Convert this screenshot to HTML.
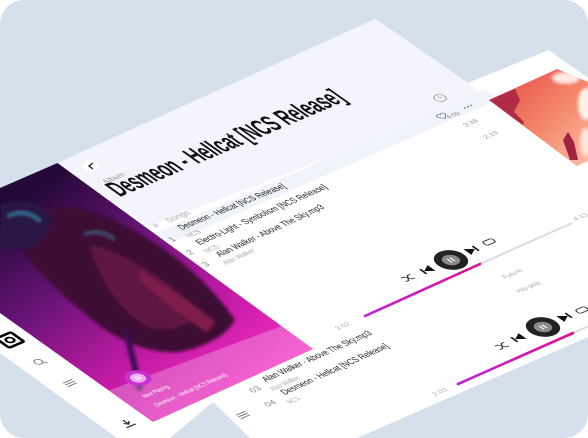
<!DOCTYPE html>
<html><head><meta charset="utf-8"><style>
html,body{margin:0;padding:0;background:#fff;width:588px;height:438px;overflow:hidden}
svg{display:block}
text{font-family:"Liberation Sans",sans-serif}
</style></head><body>
<svg width="588" height="438" viewBox="0 0 588 438" xmlns="http://www.w3.org/2000/svg">
<defs>
<clipPath id="page"><rect x="0" y="0" width="588" height="438" rx="24"/></clipPath>
<linearGradient id="art" gradientUnits="userSpaceOnUse" x1="60" y1="170" x2="230" y2="400">
<stop offset="0" stop-color="#240838"/><stop offset="0.35" stop-color="#6a1478"/><stop offset="0.7" stop-color="#c41aa6"/><stop offset="1" stop-color="#f02cc0"/></linearGradient>
<linearGradient id="cloud" gradientUnits="userSpaceOnUse" x1="500" y1="80" x2="588" y2="170">
<stop offset="0" stop-color="#e8504c"/><stop offset="0.5" stop-color="#f4876a"/><stop offset="1" stop-color="#fac0a8"/></linearGradient>
<linearGradient id="prog" gradientUnits="userSpaceOnUse" x1="360" y1="320" x2="480" y2="260">
<stop offset="0" stop-color="#c022e0"/><stop offset="1" stop-color="#e0108c"/></linearGradient>
<linearGradient id="prog2" gradientUnits="userSpaceOnUse" x1="455" y1="385" x2="575" y2="333">
<stop offset="0" stop-color="#c022e0"/><stop offset="1" stop-color="#e0108c"/></linearGradient>
<filter id="bl" x="-20%" y="-20%" width="140%" height="140%"><feGaussianBlur stdDeviation="4"/></filter>
<filter id="bl2"><feGaussianBlur stdDeviation="1.5"/></filter>
<clipPath id="artclip"><polygon points="0,188 57.5,163 313,349 153,422 0,313"/></clipPath>
<clipPath id="cloudclip"><polygon points="489,100 557,69 588,82 588,161 577,166"/></clipPath>
</defs>
<g clip-path="url(#page)">
<rect width="588" height="438" fill="#d6e0ec"/>
<polygon points="0,188 57.5,163 375.5,19 468,83 548.6,50 588,78 588,337 357,438 250,438 213,402 170,438 117,438 0,353" fill="#ffffff"/>
<polygon points="57.5,163 375.5,19 468,83 484,98 150,226" fill="#f4f5fc"/>
<polygon points="158,232 486,90 499,99 171,243" fill="#f1f3fb"/>
<ellipse cx="91" cy="166" rx="8" ry="6" fill="#fff"/>
<path d="M93,163 L89,166 L93,169" stroke="#222" stroke-width="1.4" fill="none"/>

<text transform="matrix(0.92 -0.392 0.815 0.58 120 197)" font-size="30" font-weight="bold" fill="#111" textLength="247" lengthAdjust="spacingAndGlyphs">Desmeon - Hellcat [NCS Release]</text>
<text transform="matrix(0.919 -0.395 0.815 0.58 106 184)" font-size="9" fill="#999" textLength="22" lengthAdjust="spacingAndGlyphs">Album</text>

<text transform="matrix(0.919 -0.395 0.815 0.58 156 228)" font-size="8" fill="#aaa">#</text>
<text transform="matrix(0.919 -0.395 0.815 0.58 169 223)" font-size="9" fill="#aaa" textLength="24" lengthAdjust="spacingAndGlyphs">Songs</text>
<text transform="matrix(0.919 -0.395 0.815 0.58 172 242)" font-size="9" fill="#888">1</text>
<text transform="matrix(0.919 -0.395 0.815 0.58 190 255)" font-size="9" fill="#888">2</text>
<text transform="matrix(0.919 -0.395 0.815 0.58 206 267)" font-size="9" fill="#888">3</text>
<text transform="matrix(0.925 -0.379 0.815 0.58 182 230)" font-size="10" fill="#222" textLength="113" lengthAdjust="spacingAndGlyphs">Desmeon - Hellcat [NCS Release]</text>
<text transform="matrix(0.914 -0.407 0.815 0.58 200 245)" font-size="10" fill="#222" textLength="140" lengthAdjust="spacingAndGlyphs">Electro-Light - Symbolism [NCS Release]</text>
<text transform="matrix(0.906 -0.423 0.815 0.58 220 257)" font-size="10" fill="#222" textLength="116" lengthAdjust="spacingAndGlyphs">Alan Walker - Above The Sky.mp3</text>
<text transform="matrix(0.919 -0.395 0.815 0.58 189 238)" font-size="8" fill="#aaa" textLength="14" lengthAdjust="spacingAndGlyphs">NCS</text>
<text transform="matrix(0.919 -0.395 0.815 0.58 207 253)" font-size="8" fill="#aaa" textLength="14" lengthAdjust="spacingAndGlyphs">NCS</text>
<text transform="matrix(0.919 -0.42 0.815 0.58 226 265)" font-size="8" fill="#aaa" textLength="32" lengthAdjust="spacingAndGlyphs">Alan Walker</text>
<g transform="matrix(0.919 -0.395 0.815 0.58 440 98)"><circle r="5" fill="none" stroke="#999" stroke-width="0.9"/><path d="M0,-3 V0 H2" stroke="#999" stroke-width="0.8" fill="none"/></g>
<g transform="matrix(0.919 -0.395 0.815 0.58 442 116)"><path d="M0,4 L-4,0 A2.2,2.2 0 0 1 0,-2 A2.2,2.2 0 0 1 4,0 Z" fill="none" stroke="#777" stroke-width="0.9"/></g>
<text transform="matrix(0.919 -0.395 0.815 0.58 449 119)" font-size="7" fill="#888" textLength="13" lengthAdjust="spacingAndGlyphs">4:09</text>
<g fill="#777"><circle cx="465" cy="108" r="0.9"/><circle cx="468" cy="106.7" r="0.9"/><circle cx="471" cy="105.4" r="0.9"/></g>
<text transform="matrix(0.919 -0.395 0.815 0.58 466 127)" font-size="7" fill="#999" textLength="14" lengthAdjust="spacingAndGlyphs">3:38</text>
<text transform="matrix(0.919 -0.395 0.815 0.58 486 139)" font-size="7" fill="#999" textLength="14" lengthAdjust="spacingAndGlyphs">2:19</text>

<g clip-path="url(#cloudclip)">
<rect x="480" y="60" width="120" height="120" fill="url(#cloud)"/>
<path d="M489,100 L515,89 L520,100 L514,112 L524,122 L520,132 L532,140 L540,150 L560,158 L577,166 Z" fill="#b02c44"/>
<path d="M563,140 L568,132 L574,142 L578,160 L570,160 Z" fill="#a02440"/>
<ellipse cx="566" cy="78" rx="14" ry="6" fill="#fde8e0" filter="url(#bl2)"/>
<ellipse cx="586" cy="104" rx="8" ry="16" fill="#fff0ea" filter="url(#bl2)"/>
<ellipse cx="586" cy="142" rx="6" ry="14" fill="#fde4dc" filter="url(#bl2)"/>
</g>

<line x1="480" y1="264" x2="572" y2="223" stroke="#dcdcdc" stroke-width="2"/>
<line x1="365" y1="316" x2="480" y2="264" stroke="url(#prog)" stroke-width="2.6" stroke-linecap="round"/>
<text transform="matrix(0.919 -0.395 0.815 0.58 338 330)" font-size="7" fill="#aaa" textLength="14" lengthAdjust="spacingAndGlyphs">2:02</text>
<text transform="matrix(0.919 -0.395 0.815 0.58 576 221)" font-size="7" fill="#aaa" textLength="14" lengthAdjust="spacingAndGlyphs">4:13</text>
<text transform="matrix(0.919 -0.395 0.815 0.58 505 279)" font-size="7" fill="#aaa" textLength="20" lengthAdjust="spacingAndGlyphs">Future</text>
<text transform="matrix(0.919 -0.395 0.815 0.58 519 293)" font-size="7" fill="#aaa" textLength="24" lengthAdjust="spacingAndGlyphs">Hip-pop</text>

<g transform="matrix(0.919 -0.395 0.815 0.58 408 278)"><path d="M-5,-3 L-2,-3 L2,3 L5,3 M-5,3 L-2,3 L2,-3 L5,-3" stroke="#333" stroke-width="1.1" fill="none"/></g>
<g transform="matrix(0.919 -0.395 0.815 0.58 427 270)"><path d="M-4,-4 V4" stroke="#111" stroke-width="1.8"/><path d="M5,-5 L-3,0 L5,5Z" fill="#111"/></g>
<g transform="matrix(0.919 -0.395 0.815 0.58 451 260)"><circle r="14" fill="#222"/><circle r="7.5" fill="#8a8a8a"/><path d="M-1.6,-3 V3 M1.6,-3 V3" stroke="#fff" stroke-width="1.3"/></g>
<g transform="matrix(0.919 -0.395 0.815 0.58 472 250)"><path d="M-5,-5 L3,0 L-5,5Z" fill="#111"/><path d="M4,-4 V4" stroke="#111" stroke-width="1.8"/></g>
<g transform="matrix(0.919 -0.395 0.815 0.58 489 242)"><rect x="-5" y="-3" width="10" height="6" rx="2" fill="none" stroke="#333" stroke-width="1.1"/></g>

<line x1="573" y1="333" x2="600" y2="321" stroke="#dcdcdc" stroke-width="2"/>
<line x1="458" y1="384" x2="573" y2="333" stroke="url(#prog2)" stroke-width="2.6" stroke-linecap="round"/>
<text transform="matrix(0.919 -0.395 0.815 0.58 435 396)" font-size="7" fill="#aaa" textLength="14" lengthAdjust="spacingAndGlyphs">2:03</text>
<g transform="matrix(0.919 -0.395 0.815 0.58 502 346)"><path d="M-5,-3 L-2,-3 L2,3 L5,3 M-5,3 L-2,3 L2,-3 L5,-3" stroke="#333" stroke-width="1.1" fill="none"/></g>
<g transform="matrix(0.919 -0.395 0.815 0.58 518 338)"><path d="M-4,-4 V4" stroke="#111" stroke-width="1.8"/><path d="M5,-5 L-3,0 L5,5Z" fill="#111"/></g>
<g transform="matrix(0.919 -0.395 0.815 0.58 543 327)"><circle r="14" fill="#222"/><circle r="7.5" fill="#8a8a8a"/><path d="M-1.6,-3 V3 M1.6,-3 V3" stroke="#fff" stroke-width="1.3"/></g>
<g transform="matrix(0.919 -0.395 0.815 0.58 565 317)"><path d="M-5,-5 L3,0 L-5,5Z" fill="#111"/><path d="M4,-4 V4" stroke="#111" stroke-width="1.8"/></g>
<g transform="matrix(0.919 -0.395 0.815 0.58 582 310)"><rect x="-5" y="-3" width="10" height="6" rx="2" fill="none" stroke="#333" stroke-width="1.1"/></g>

<text transform="matrix(0.919 -0.395 0.815 0.58 253 393)" font-size="9" fill="#888" textLength="10" lengthAdjust="spacingAndGlyphs">03</text>
<text transform="matrix(0.919 -0.395 0.815 0.58 268 407)" font-size="9" fill="#888" textLength="10" lengthAdjust="spacingAndGlyphs">04</text>
<text transform="matrix(0.912 -0.409 0.815 0.58 266 382)" font-size="10" fill="#222" textLength="117" lengthAdjust="spacingAndGlyphs">Alan Walker - Above The Sky.mp3</text>
<text transform="matrix(0.919 -0.41 0.815 0.58 273 391)" font-size="8" fill="#aaa" textLength="30" lengthAdjust="spacingAndGlyphs">Alan Walker</text>
<text transform="matrix(0.909 -0.416 0.815 0.58 285 395)" font-size="10" fill="#222" textLength="115" lengthAdjust="spacingAndGlyphs">Desmeon - Hellcat [NCS Release]</text>
<text transform="matrix(0.919 -0.395 0.815 0.58 290 404)" font-size="8" fill="#aaa" textLength="12" lengthAdjust="spacingAndGlyphs">NCS</text>
<g transform="matrix(0.919 -0.395 0.815 0.58 243 415)"><path d="M-5,-3 H5 M-5,0 H5 M-5,3 H5" stroke="#666" stroke-width="1"/></g>

<g clip-path="url(#artclip)">
<rect x="0" y="150" width="320" height="280" fill="url(#art)"/>
<g filter="url(#bl2)">
<path d="M30,215 C70,195 110,215 150,240 C185,262 215,290 235,320 C225,338 200,348 180,352 C150,354 120,342 95,322 C70,302 45,280 25,255 Z" fill="#3e0c34"/>
<path d="M90,245 C125,252 165,278 200,312 C190,326 170,332 150,328 C122,312 100,285 90,245 Z" fill="#5e1242"/>
<path d="M140,270 C170,288 195,305 215,322 L207,332 C185,318 160,300 140,280 Z" fill="#7e1a4c"/>
<path d="M0,205 C20,196 40,202 52,218 C50,240 30,252 10,250 L0,246 Z" fill="#2a1244"/>
<path d="M8,216 C20,210 32,213 40,221" stroke="#3aa8d0" stroke-width="2" fill="none" opacity="0.8"/>
<path d="M85,234 C96,230 106,233 114,239" stroke="#3a98c8" stroke-width="1.5" fill="none" opacity="0.7"/>
<path d="M125,330 C132,350 135,370 140,390" stroke="#3a1050" stroke-width="6" fill="none"/>
</g>
<polygon points="108.6,390.5 282,326 313,349 153,422" fill="#ffffff" opacity="0.25"/>
</g>
<g transform="matrix(0.919 -0.395 0.815 0.58 138 378)"><circle r="11" fill="#c830d0"/><circle r="6.5" fill="#f0b0f0"/><path d="M-1.4,-2.5 V2.5 M1.4,-2.5 V2.5" stroke="#fff" stroke-width="1.2"/></g>
<text transform="matrix(0.919 -0.395 0.815 0.58 145 398)" font-size="7" fill="#fff" textLength="27" lengthAdjust="spacingAndGlyphs">Now Playing</text>
<text transform="matrix(0.914 -0.405 0.815 0.58 157 407)" font-size="7" fill="#fff" textLength="77" lengthAdjust="spacingAndGlyphs">Desmeon - Hellcat [NCS Release]</text>

<g transform="matrix(0.919 -0.395 0.815 0.58 10 340)"><rect x="-8" y="-8" width="16" height="16" rx="1.5" fill="none" stroke="#000" stroke-width="3"/><circle r="3.5" fill="none" stroke="#000" stroke-width="2.2"/></g>
<g transform="matrix(0.919 -0.395 0.815 0.58 40 362)"><circle cx="-1" cy="-1" r="3.5" fill="none" stroke="#777" stroke-width="1"/><path d="M1.5,1.5 L4.5,4.5" stroke="#777" stroke-width="1"/></g>
<g transform="matrix(0.919 -0.395 0.815 0.58 70 383)"><path d="M-5,-3 H5 M-5,0 H5 M-5,3 H5" stroke="#666" stroke-width="1"/></g>
<g transform="matrix(0.919 -0.395 0.815 0.58 127 423)"><path d="M0,-5 V2 M-3,-1 L0,2 L3,-1 M-5,5 H5" stroke="#222" stroke-width="1.3" fill="none"/></g>
</g>
</svg>
</body></html>
